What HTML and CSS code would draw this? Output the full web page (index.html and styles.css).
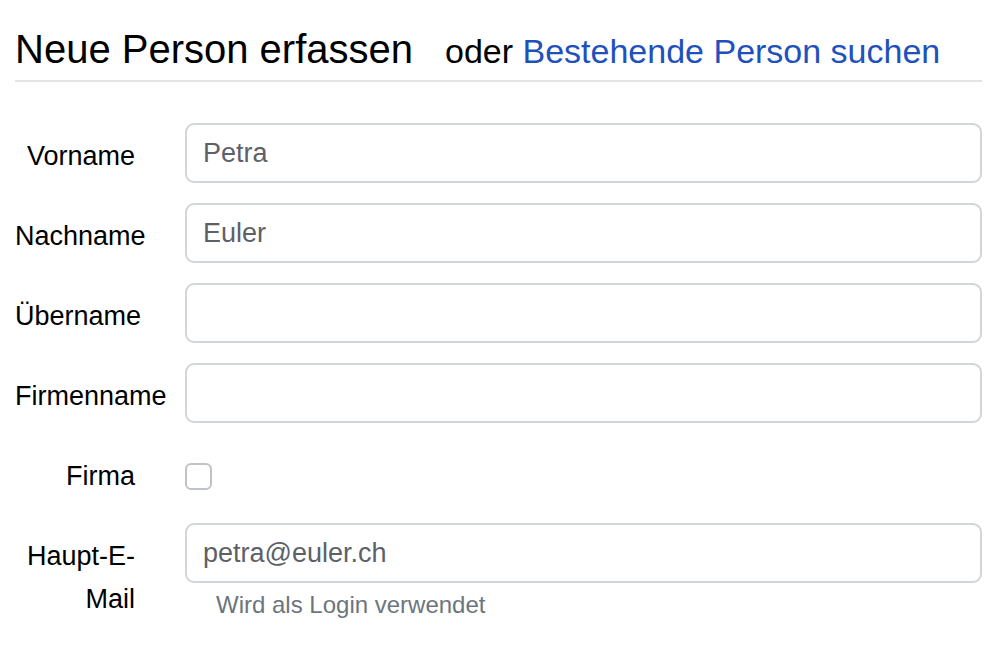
FILE: index.html
```html
<!DOCTYPE html>
<html lang="de">
<head>
<meta charset="utf-8">
<title>Neue Person erfassen</title>
<link rel="stylesheet" href="styles.css">
</head>
<body>
<div class="page">
  <div class="header">
    <h1 class="title">Neue Person erfassen</h1>
    <p class="alt">oder <a class="alt-link" href="#">Bestehende Person suchen</a></p>
  </div>
  <form class="form">
    <div class="row">
      <label class="label" for="vorname">Vorname</label>
      <div class="field"><input class="input" id="vorname" type="text" value="Petra"></div>
    </div>
    <div class="row">
      <label class="label" for="nachname">Nachname</label>
      <div class="field"><input class="input" id="nachname" type="text" value="Euler"></div>
    </div>
    <div class="row">
      <label class="label" for="uebername">Übername</label>
      <div class="field"><input class="input" id="uebername" type="text" value=""></div>
    </div>
    <div class="row">
      <label class="label" for="firmenname">Firmenname</label>
      <div class="field"><input class="input" id="firmenname" type="text" value=""></div>
    </div>
    <div class="row row-check">
      <label class="label" for="firma">Firma</label>
      <div class="field field-check"><span class="checkbox" id="firma"></span></div>
    </div>
    <div class="row">
      <label class="label" for="email">Haupt-E-Mail</label>
      <div class="field">
        <input class="input" id="email" type="text" value="petra@euler.ch">
        <p class="help">Wird als Login verwendet</p>
      </div>
    </div>
  </form>
</div>
</body>
</html>
```

FILE: styles.css
```css
html, body {
  margin: 0;
  padding: 0;
  background: #ffffff;
}

body {
  font-family: "Liberation Sans", Arial, Helvetica, sans-serif;
  color: #000000;
}

.page {
  padding: 0 8px 0 15px;
}

.header {
  display: flex;
  align-items: baseline;
  padding-top: 26px;
  padding-bottom: 8px;
  border-bottom: 2px solid #e4e4e4;
}

.title {
  margin: 0;
  font-size: 40px;
  line-height: 46px;
  font-weight: normal;
  color: #000000;
}

.alt {
  margin: 0 0 0 32px;
  font-size: 34px;
  line-height: 40px;
  color: #000000;
}

.alt-link {
  color: #1f51bd;
  text-decoration: none;
}

.form {
  padding-top: 41px;
}

.row {
  display: grid;
  grid-template-columns: 120px 1fr;
  column-gap: 50px;
  margin-bottom: 20px;
  min-height: 60px;
}

.label {
  display: block;
  text-align: right;
  font-size: 27px;
  line-height: 43px;
  padding-top: 12px;
  color: #000000;
}

.field {
  min-width: 0;
}

.input {
  display: block;
  box-sizing: border-box;
  width: 100%;
  height: 60px;
  margin: 0;
  padding: 0 16px;
  border: 2px solid #d2d5d9;
  border-radius: 9px;
  background: #ffffff;
  font-family: "Liberation Sans", Arial, Helvetica, sans-serif;
  font-size: 27px;
  color: #5d6167;
  outline: none;
}

.field-check {
  padding-top: 20px;
}

.checkbox {
  display: block;
  box-sizing: border-box;
  width: 27px;
  height: 27px;
  border: 2px solid #bfc3c7;
  border-radius: 6px;
  background: #ffffff;
}

.help {
  margin: 7px 0 0 0;
  padding-left: 31px;
  font-size: 24px;
  line-height: 30px;
  color: #6c757d;
}
```
